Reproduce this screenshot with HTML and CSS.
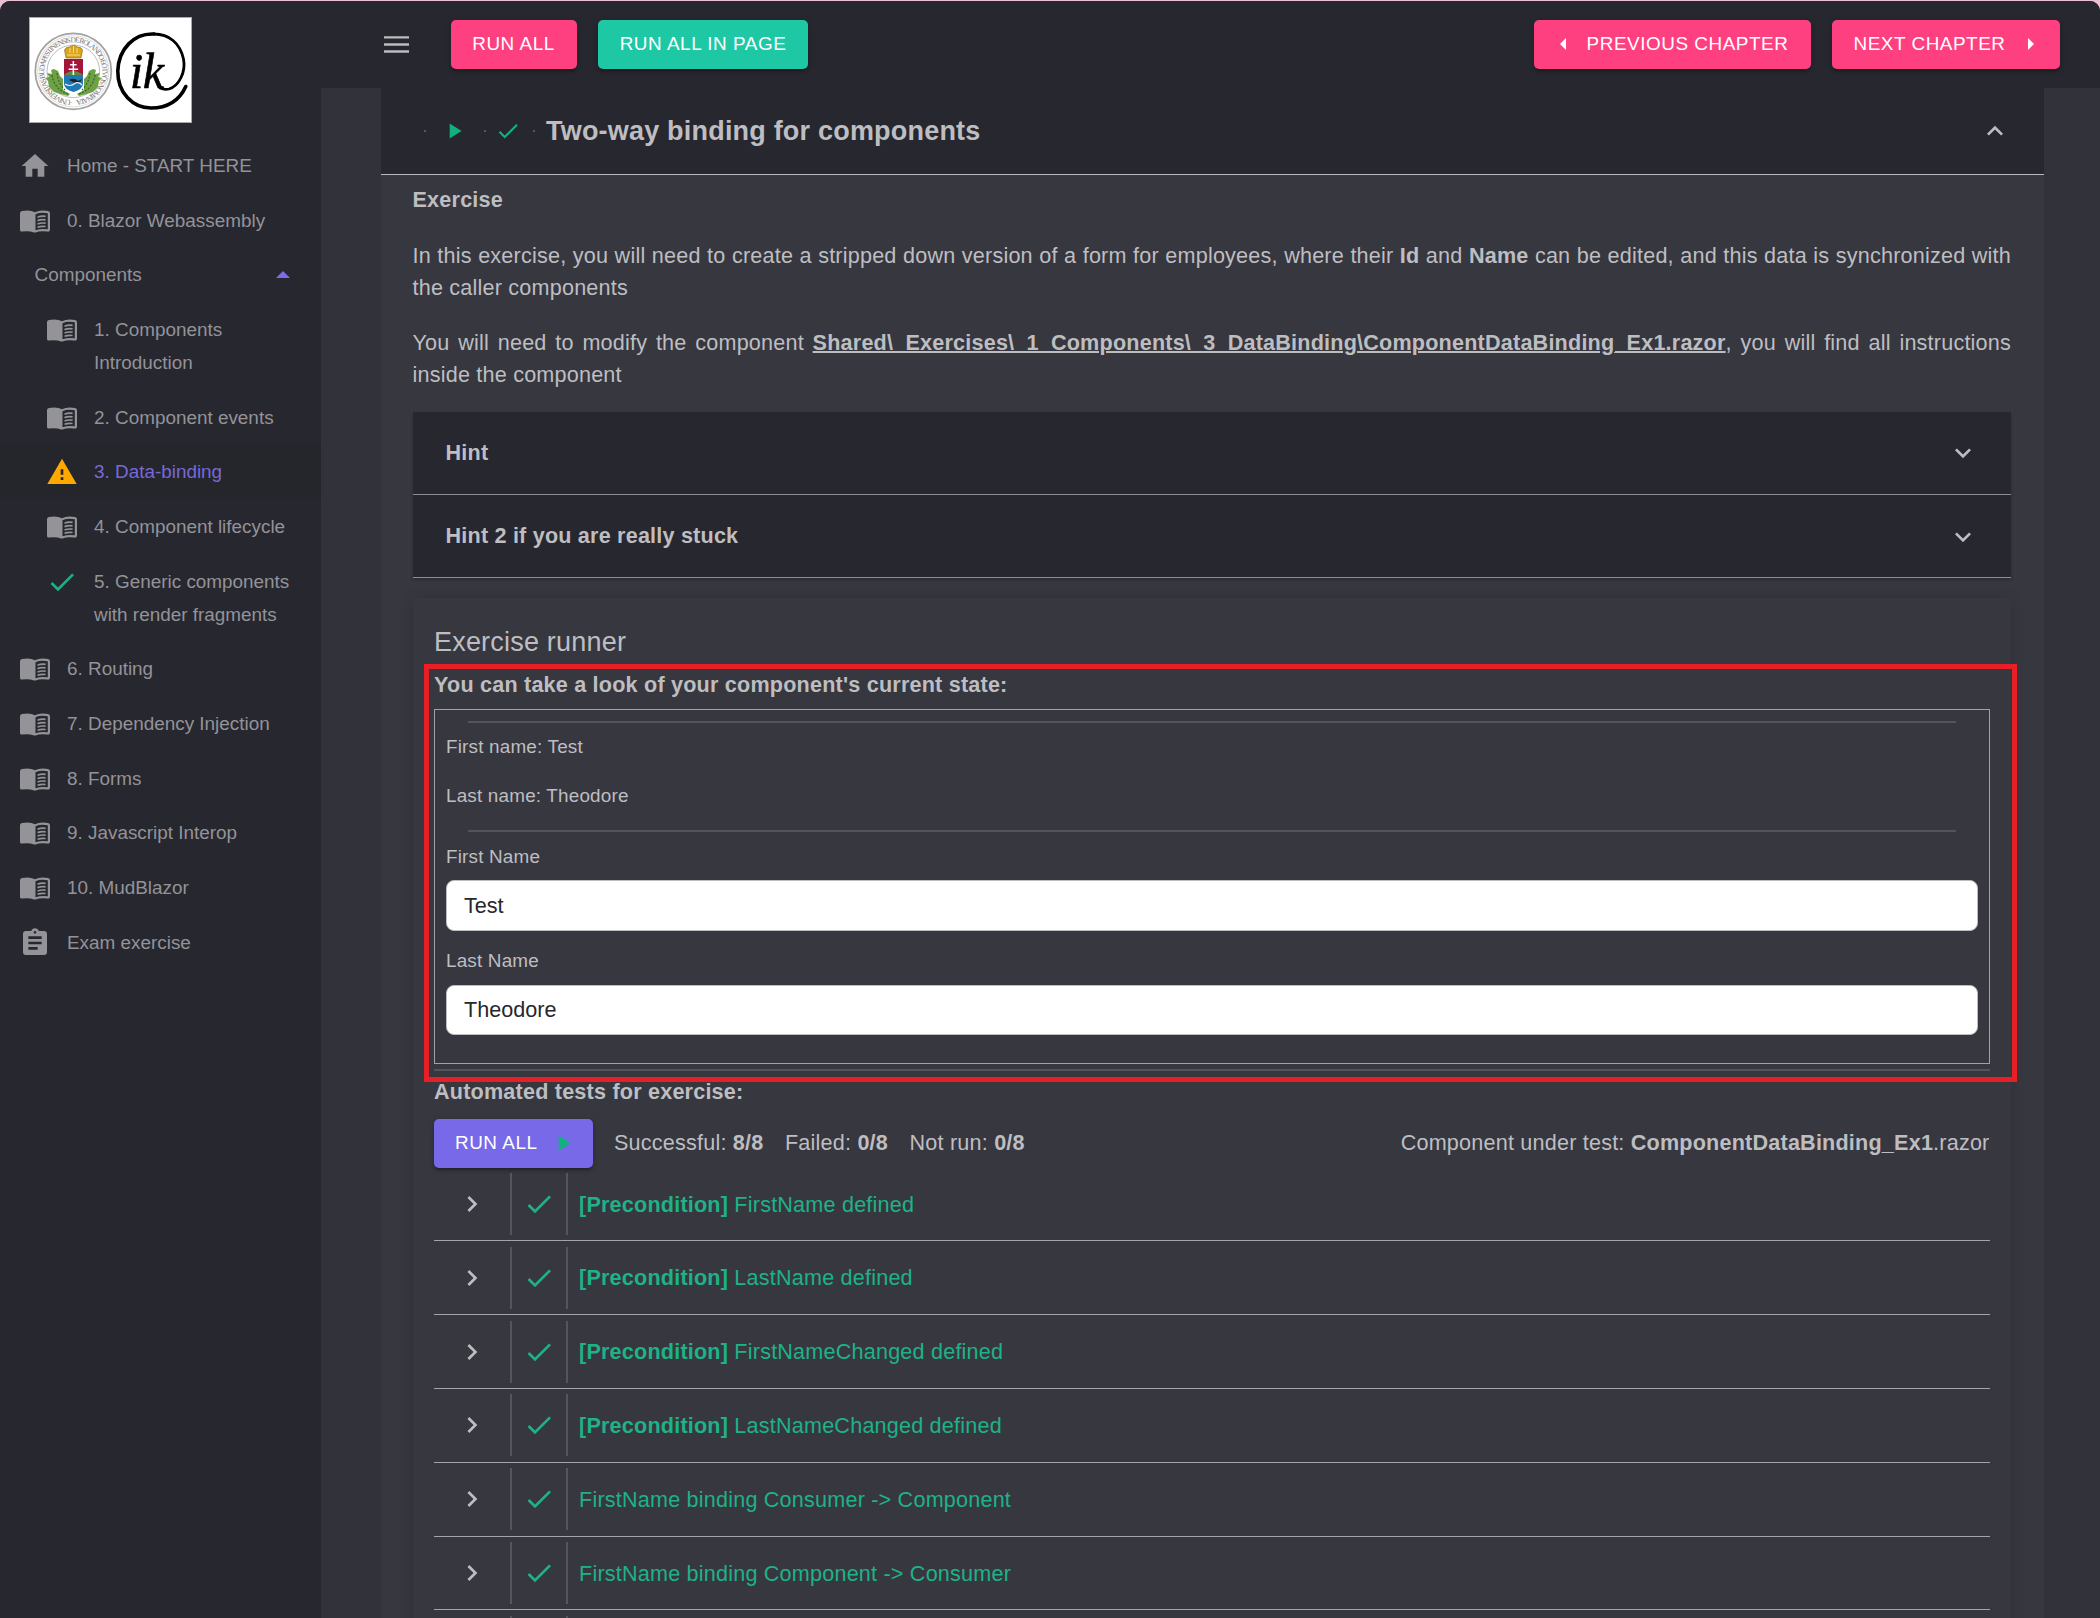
FILE: index.html
```html
<!DOCTYPE html>
<html lang="en">
<head>
<meta charset="utf-8">
<title>Data-binding</title>
<link rel="stylesheet" href="styles.css">
</head>
<body>
<svg class="defs" width="0" height="0" aria-hidden="true">
  <symbol id="book" viewBox="0 0 30 23">
    <path fill="currentColor" d="M0 3Q0 1.2 2 .9Q10 -.6 15 2.2Q20 -.4 28 1Q30 1.3 30 3.2V19.5Q30 22 27.5 21.6Q20 20.6 15.5 22.6H14Q9 20.400 2 21.600Q0 21.800 0 20Z"/>
    <path fill="#27272f" d="M15.500 4.200Q20.500 1.900 27.800 3.200V19.300Q21 18.300 15.500 20.200Z"/>
    <path fill="none" stroke="currentColor" stroke-width="1.700" d="M17.500 7.200Q21 5.800 25.600 6.400M17.500 10.600Q21 9.200 25.600 9.800M17.500 14Q21 12.600 25.600 13.200M17.500 17.300Q21 15.900 25.600 16.500"/>
  </symbol>
  <symbol id="check" viewBox="0 0 24 24"><path fill="currentColor" d="M9 16.170 4.830 12l-1.420 1.410L9 19 21 7l-1.410-1.410z"/></symbol>
  <symbol id="play" viewBox="0 0 24 24"><path fill="currentColor" d="M8 5v14l11-7z"/></symbol>
  <symbol id="down" viewBox="0 0 24 24"><path fill="currentColor" d="M7.410 8.590 12 13.170l4.590-4.580L18 10l-6 6-6-6z"/></symbol>
  <symbol id="right" viewBox="0 0 24 24"><path fill="currentColor" d="M8.590 16.590 13.170 12 8.590 7.410 10 6l6 6-6 6z"/></symbol>
</svg>
<div class="app">
  <aside class="drawer">
    <svg class="logo" viewBox="0 0 163 106">
      <rect x=".5" y=".5" width="162" height="105" fill="#fff" stroke="#a9a9ad"/>
      <circle cx="44.300" cy="54.300" r="38" fill="#fff" stroke="#a2a2a2" stroke-width="1.800"/>
      <circle cx="44.300" cy="54.300" r="35.600" fill="none" stroke="#c8c8c8" stroke-width=".6"/>
      <circle cx="44.300" cy="54.300" r="26.300" fill="none" stroke="#b4b4b4" stroke-width=".9"/>
      <path id="ring" fill="none" d="M44.300 83.300A29 29 0 1 1 44.310 83.300"/>
      <text class="seal"><textPath href="#ring" startOffset="1" textLength="178">·UNIVERSITAS BUDAPESTINENSIS DE ROLANDO EÖTVÖS NOMINATA</textPath></text>
      <path fill="#6fa144" d="M25 52l4 2 2 5 3 3v11l7 4-2 2-8-2-6-2-5-5-1-6-3-3 4-1-2-4 5 1-1-4zM64 52l-4 2-2 5-3 3v11l-7 4 2 2 8-2 6-2 5-5 1-6 3-3-4-1 2-4-5 1 1-4z"/>
      <path fill="none" stroke="#2e672b" stroke-width="1.200" stroke-dasharray="2 1.500" d="M23 58Q25 72 39 77M66 58Q64 72 50 77M28 56Q29 66 36 73M61 56Q60 66 53 73"/>
      <path fill="#a3153a" d="M35 42h19v17H35z"/>
      <path fill="#5d8a3a" d="M35 58q9-8 19 0v2H35z"/>
      <path fill="#1f78b4" d="M35 58h19v9q0 5-9.500 8Q35 72 35 67z"/>
      <path fill="#fff" d="M43.600 44h1.500v3h2.500v1.400h-2.500v3h4v1.500h-4v5h-1.500v-5h-4v-1.500h4v-3h-2.500V47h2.500z"/>
      <path fill="#16222c" d="M40 63q5-3 9 1l4-2q-2 5-7 4z"/>
      <path fill="none" stroke="#e8f1f4" stroke-width="1.200" d="M36 67q5 3 9 0t8 1"/>
      <path fill="#d9a521" stroke="#9a6b13" stroke-width=".7" d="M37 41l-1.500-8q1-3 5-3 3-2 4-1.500 1-.5 4 1.500 4 0 5 3L52 41z"/>
      <path fill="none" stroke="#f7dd77" stroke-width="1" d="M38 38h13M41 31v5M44.500 29v7M48 31v5"/>
      <path fill="none" stroke="#000" stroke-width="2.800" stroke-linecap="round" d="M131 71Q135 73 140 72C150 69 157 55 154.500 42C151 26 140 17 125 17"/>
      <path fill="none" stroke="#000" stroke-width="3.600" stroke-linecap="round" d="M125 17C105 16 89.500 32 88.800 54C88.500 76 104 91 122 91C140 91 151 82 156.800 69.500"/>
      <text class="mark" x="101" y="71" textLength="34" lengthAdjust="spacingAndGlyphs">ik</text>
    </svg>
    <nav class="nav">
      <a class="item"><svg class="ic home" viewBox="0 0 24 24"><path fill="currentColor" d="M10 20v-6h4v6h5v-8h3L12 3 2 12h3v8z"/></svg>Home - START HERE</a>
      <a class="item"><svg class="ic book"><use href="#book"/></svg>0. Blazor Webassembly</a>
      <a class="item group">Components<svg class="caret" viewBox="0 0 14 7"><path fill="#7c6bea" d="M0 7 7 0l7 7z"/></svg></a>
      <a class="item sub"><svg class="ic book"><use href="#book"/></svg><span>1. Components<br>Introduction</span></a>
      <a class="item sub"><svg class="ic book"><use href="#book"/></svg>2. Component events</a>
      <a class="item sub active"><svg class="ic warn" viewBox="0 0 24 24"><path fill="#ffa800" d="M1 21h22L12 2 1 21zm12-3h-2v-2h2v2zm0-4h-2v-4h2v4z"/></svg>3. Data-binding</a>
      <a class="item sub"><svg class="ic book"><use href="#book"/></svg>4. Component lifecycle</a>
      <a class="item sub"><svg class="ic ok"><use href="#check"/></svg><span>5. Generic components<br>with render fragments</span></a>
      <a class="item"><svg class="ic book"><use href="#book"/></svg>6. Routing</a>
      <a class="item"><svg class="ic book"><use href="#book"/></svg>7. Dependency Injection</a>
      <a class="item"><svg class="ic book"><use href="#book"/></svg>8. Forms</a>
      <a class="item"><svg class="ic book"><use href="#book"/></svg>9. Javascript Interop</a>
      <a class="item"><svg class="ic book"><use href="#book"/></svg>10. MudBlazor</a>
      <a class="item"><svg class="ic exam" viewBox="0 0 24 24"><path fill="currentColor" d="M19 3h-4.180C14.400 1.840 13.300 1 12 1c-1.300 0-2.400.84-2.820 2H5c-1.100 0-2 .9-2 2v14c0 1.100.9 2 2 2h14c1.100 0 2-.9 2-2V5c0-1.100-.9-2-2-2zm-7 0c.55 0 1 .45 1 1s-.45 1-1 1-1-.45-1-1 .45-1 1-1zm2 14H7v-2h7v2zm3-4H7v-2h10v2zm0-4H7V7h10v2z"/></svg>Exam exercise</a>
    </nav>
  </aside>
  <div class="page">
    <header class="bar">
      <svg class="menu" viewBox="0 0 24 16"><path fill="#bcbcc0" d="M0 0h24v2.300H0zM0 6.800h24v2.300H0zM0 13.600h24v2.300H0z"/></svg>
      <button class="btn pink b1">RUN ALL</button>
      <button class="btn green b2">RUN ALL IN PAGE</button>
      <button class="btn pink b3"><svg class="tri" viewBox="0 0 6 12"><path fill="#fff" d="M6 0v12L0 6z"/></svg>PREVIOUS CHAPTER</button>
      <button class="btn pink b4">NEXT CHAPTER<svg class="tri" viewBox="0 0 6 12"><path fill="#fff" d="M0 0v12l6-6z"/></svg></button>
    </header>
    <main class="panel">
      <div class="panel-head">
        <i class="dot"></i><svg class="h-play"><use href="#play"/></svg><i class="dot"></i><svg class="h-check"><use href="#check"/></svg><i class="dot"></i>
        <h2>Two-way binding for components</h2>
        <svg class="chev up"><use href="#down"/></svg>
      </div>
      <div class="content">
        <p class="exercise"><b>Exercise</b></p>
        <p>In this exercise, you will need to create a stripped down version of a form for employees, where their <b>Id</b> and <b>Name</b> can be edited, and this data is synchronized with the caller components</p>
        <p>You will need to modify the component <b><u>Shared\_Exercises\_1_Components\_3_DataBinding\ComponentDataBinding_Ex1.razor</u></b>, you will find all instructions inside the component</p>
        <div class="hints">
          <div class="hint h1">Hint<svg class="chev"><use href="#down"/></svg></div>
          <div class="hint h2">Hint 2 if you are really stuck<svg class="chev"><use href="#down"/></svg></div>
        </div>
        <section class="card">
          <h3>Exercise runner</h3>
          <div class="highlight"></div>
          <div class="label">You can take a look of your component's current state:</div>
          <div class="state">
            <hr class="r1">
            <div class="line l1">First name: Test</div>
            <div class="line l2">Last name: Theodore</div>
            <hr class="r2">
            <label class="line l3">First Name</label>
            <div class="input first">Test</div>
            <label class="line l4">Last Name</label>
            <div class="input">Theodore</div>
          </div>
          <hr class="r3">
          <div class="label auto">Automated tests for exercise:</div>
          <div class="summary">
            <button class="btn violet">RUN ALL<svg class="s-play"><use href="#play"/></svg></button>
            <span>Successful: <b>8/8</b></span><span>Failed: <b>0/8</b></span><span>Not run: <b>0/8</b></span>
            <span class="under">Component under test: <b>ComponentDataBinding_Ex1</b>.razor</span>
          </div>
          <div class="tests">
            <div class="test"><svg class="t-arrow"><use href="#right"/></svg><i class="t-check"><svg><use href="#check"/></svg></i><span><b>[Precondition]</b> FirstName defined</span></div>
            <div class="test"><svg class="t-arrow"><use href="#right"/></svg><i class="t-check"><svg><use href="#check"/></svg></i><span><b>[Precondition]</b> LastName defined</span></div>
            <div class="test"><svg class="t-arrow"><use href="#right"/></svg><i class="t-check"><svg><use href="#check"/></svg></i><span><b>[Precondition]</b> FirstNameChanged defined</span></div>
            <div class="test"><svg class="t-arrow"><use href="#right"/></svg><i class="t-check"><svg><use href="#check"/></svg></i><span><b>[Precondition]</b> LastNameChanged defined</span></div>
            <div class="test"><svg class="t-arrow"><use href="#right"/></svg><i class="t-check"><svg><use href="#check"/></svg></i><span>FirstName binding Consumer -&gt; Component</span></div>
            <div class="test"><svg class="t-arrow"><use href="#right"/></svg><i class="t-check"><svg><use href="#check"/></svg></i><span>FirstName binding Component -&gt; Consumer</span></div>
            <div class="test"><svg class="t-arrow"></svg><i class="t-check"></i></div>
          </div>
        </section>
      </div>
    </main>
  </div>
</div>
</body>
</html>
```
FILE: styles.css
```css
* { box-sizing: border-box; }
html, body { margin: 0; height: 1618px; overflow: hidden; background: #ecc0d2; }
body {
  font-family: "Liberation Sans", Arial, sans-serif;
  font-size: 21.6px;
  letter-spacing: .2px;
  color: #bebec1;
}
.defs { position: absolute; }
svg { display: block; flex: none; }
p, h2, h3, hr { margin: 0; }
.app {
  display: flex;
  height: 1617px;
  margin-top: 1px;
  background: #32323b;
  border-radius: 10px 10px 0 0;
  overflow: hidden;
}

/* Sidebar */
.drawer { width: 321px; flex: none; background: #27272f; }
.logo { width: 163px; height: 106px; margin: 16px 0 0 29px; }
.seal { font-family: "Liberation Serif", serif; font-size: 7.6px; letter-spacing: 0; fill: #777; }
.mark { font-family: "Liberation Serif", serif; font-style: italic; font-size: 50px; letter-spacing: 0; fill: #000; stroke: #000; stroke-width: .7px; }
.nav { padding-top: 15px; font-size: 18.9px; line-height: 33px; color: #939398; letter-spacing: 0; }
.item { display: flex; padding: 10.85px 0 10.85px 20px; }
.item.sub { padding-left: 47px; }
.item.group { padding-left: 34.5px; }
.ic { width: 30px; margin-right: 17px; }
.ic.book { height: 23px; margin-top: 6px; }
.ic.home, .ic.exam, .ic.warn, .ic.ok { height: 32px; width: 32px; margin: 1px 16px 0 -1px; }
.ok { color: #17b384; }
.caret { width: 14px; height: 7px; margin: 13px 31px 0 auto; }
.active { background: #25252c; color: #7769da; }

/* Top bar */
.page { flex: 1; }
.bar { display: flex; height: 87px; padding: 19px 40px 0 63px; background: #27272f; }
.menu { width: 25px; height: 17px; margin: 16px 41.5px 0 0; }
.btn {
  display: flex;
  align-items: center;
  justify-content: center;
  height: 48.5px;
  padding: 0;
  border: 0;
  border-radius: 5px;
  font: 18.9px "Liberation Sans", Arial, sans-serif;
  letter-spacing: .54px;
  color: #fff;
  box-shadow: 0 4px 2px -3px rgba(0,0,0,.25), 0 3px 3px rgba(0,0,0,.16), 0 1px 6px rgba(0,0,0,.14);
}
.pink { background: #ff4080; }
.green { background: #1ec8a5; }
.violet { background: #7769e7; }
.b1 { width: 126px; }
.b2 { width: 210px; margin-left: 21.5px; }
.b3 { width: 277px; margin-left: auto; gap: 21px; padding-left: 4px; }
.b4 { width: 228px; margin-left: 21.5px; gap: 22px; padding-right: 5px; }
.tri { width: 6px; height: 12px; }

/* Chapter panel */
.panel { width: 1663px; height: 1530px; margin-left: 59.5px; background: #373740; }
.panel-head { display: flex; align-items: center; height: 87px; padding: 0 31px 0 43px; background: #27272f; border-bottom: 1px solid #b9b9be; }
.dot { width: 2px; height: 2px; background: #55555c; }
.h-play { width: 26px; height: 26px; margin: 0 17px 0 15px; }
.h-play, .h-check, .s-play { color: #10b07f; }
.h-check { width: 26px; height: 26px; margin: 0 12px 0 9px; }
h2 { font-size: 27px; line-height: 43px; margin-left: 11.5px; letter-spacing: .2px; }
.chev { width: 32px; height: 32px; margin-left: auto; color: #bebec1; }
.up { transform: rotate(180deg); margin-right: 2px; }
.content { padding: 8.5px 32.5px 0 32px; line-height: 32.7px; }
.content p { margin-bottom: 21.5px; text-align: justify; }
.content .exercise { margin-bottom: 23.5px; }
.content p:nth-child(3) { margin-bottom: 20px; }
u { text-decoration-thickness: 2px; text-underline-offset: 1px; }
.hint { display: flex; align-items: center; padding: 1px 32px 0 33px; background: #27272f; border-bottom: 1px solid #8c8c91; font-weight: bold; }
.hints { box-shadow: 0 2px 3px rgba(0,0,0,.2); }
.h1 { height: 82.5px; }
.h2 { height: 83px; padding-top: 2px; }

/* Exercise runner */
.card { position: relative; height: 1100px; margin-top: 20.5px; padding: 23px 21.5px 0; border-radius: 5px; box-shadow: 0 1px 14px rgba(0,0,0,.16); }
h3 { height: 43px; line-height: 43px; font-size: 27px; font-weight: 400; letter-spacing: .2px; }
.label { height: 33px; margin-top: 3.5px; line-height: 33px; font-weight: bold; }
.highlight { position: absolute; left: 11px; top: 66px; width: 1593px; height: 418px; border: 5px solid #e81f27; }
.state { height: 355px; margin-top: 8px; padding: 11px 11px 0; border: 1px solid #a1a1a7; }
hr { border: 0; height: 2px; background: #54545c; }
.r1, .r2 { margin: 0 21.5px; }
.line { display: block; height: 27px; line-height: 27px; font-size: 18.9px; letter-spacing: .18px; }
.l1 { margin-top: 10px; }
.l2 { margin-top: 22px; }
.r2 { margin-top: 21px; }
.l3 { margin-top: 11px; }
.input { height: 50.5px; margin-top: 10.5px; padding-left: 17px; border: 1px solid #bbbbc0; border-radius: 8px; background: #fff; color: #27272c; line-height: 48px; letter-spacing: 0; }
.first { line-height: 50px; }
.l4 { margin-top: 16.5px; }
.r3 { margin-top: 5px; }
.auto { margin-top: 4px; }
.summary { display: flex; align-items: center; gap: 21.5px; margin-top: 11.5px; }
.summary span { padding-top: 1px; }
.summary .btn { width: 158.5px; padding-left: 4px; gap: 12px; }
.s-play { width: 26px; height: 26px; }
.under { margin-left: auto; }
.test { display: flex; align-items: center; height: 73.8px; border-bottom: 1px solid #a4a4a9; color: #1eb287; }
.test span { padding-top: 2px; }
.t-arrow { width: 32px; height: 32px; margin: 0 22px 0 22px; color: #bebec1; }
.t-check { display: flex; align-items: center; justify-content: center; width: 58px; height: 62px; border: solid #55555d; border-width: 0 2px; margin-right: 11px; }
.t-check svg { width: 32px; height: 32px; }
```
